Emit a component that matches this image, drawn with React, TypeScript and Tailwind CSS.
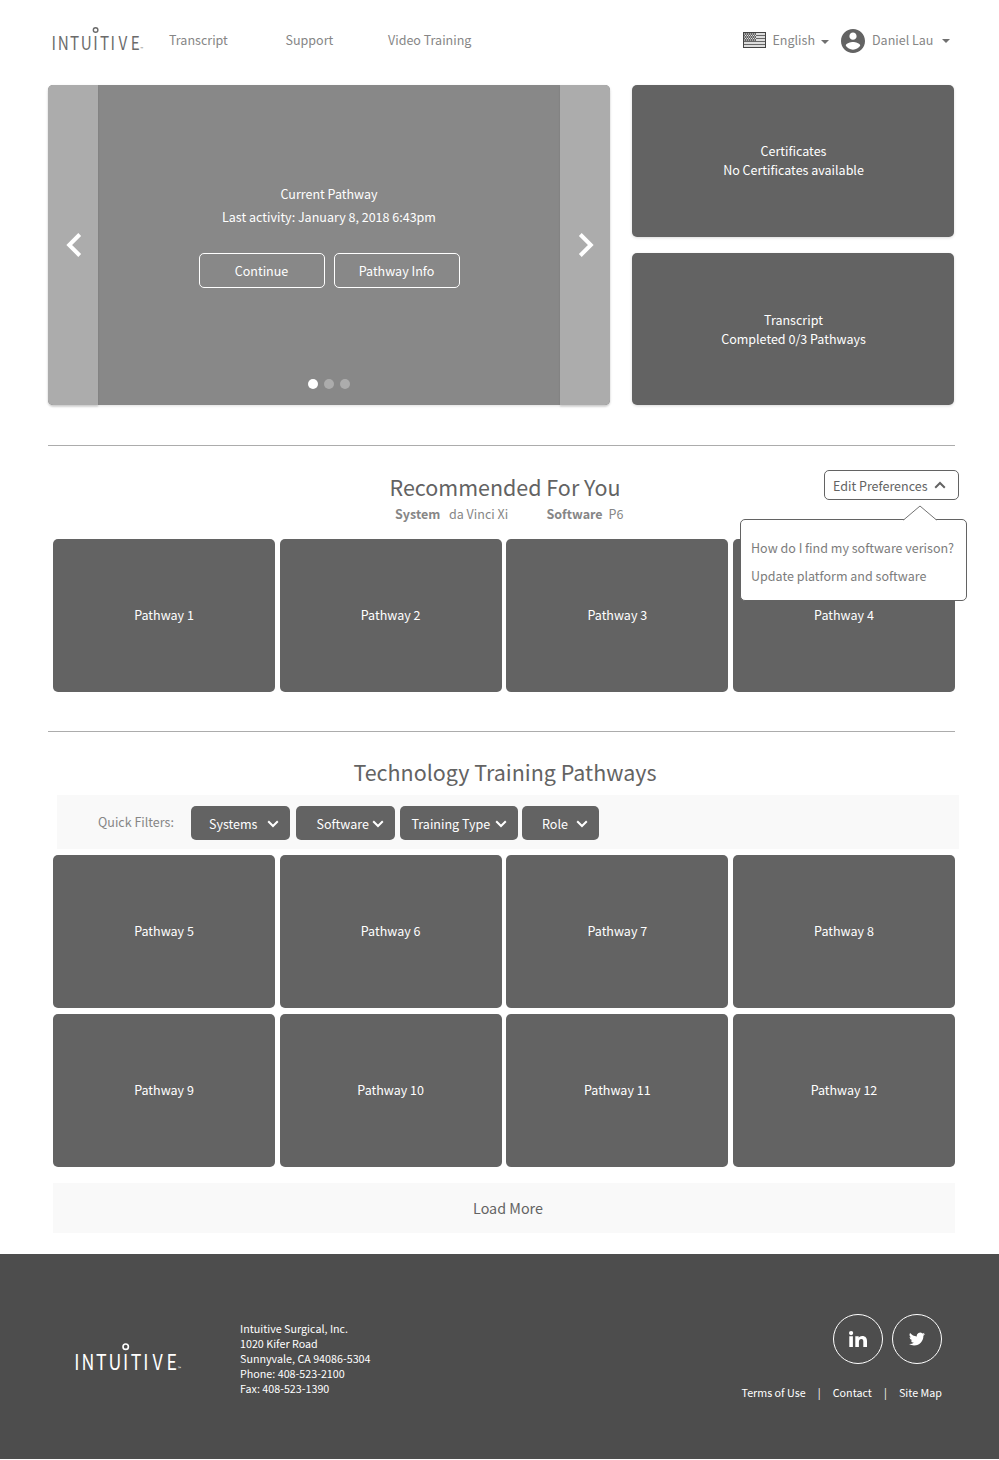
import React from "react";

function Logo({ className }: { className: string }) {
  return (
    <svg viewBox="0 0 92 30" className={"overflow-visible " + className} fill="currentColor">
      <circle cx="43.6" cy="4" r="2.3" fill="none" stroke="currentColor" strokeWidth="1.4" />
      <g transform="scale(0.82 1)" fontFamily="'Noto Sans CJK JP', sans-serif" fontSize="18.6" textAnchor="middle">
        <text y="23.7" x="2 13.8 27.6 41.9 53.1 64 74.2 86.6 101.4">INTUITIVE</text>
      </g>
      <text x="88.4" y="24.4" fontSize="3.5" fontFamily="'Noto Sans CJK JP', sans-serif">™</text>
    </svg>
  );
}

function Flag() {
  return (
    <svg viewBox="0 0 23 16" className="h-4 w-[23px]">
      <rect x="0.5" y="0.5" width="22" height="15" fill="#ddd" stroke="#444" />
      <path d="M1 3.5H22M1 6.5H22M1 9.5H22M1 12.5H22" stroke="#5a5a5a" strokeWidth="0.9" />
      <rect x="1" y="1" width="12" height="8.5" fill="#666" />
      <path d="M1 2H13M2 3.5H13M1 5H13M2 6.5H13M1 8H13" stroke="#eee" strokeWidth="0.9" strokeDasharray="1 1" />
    </svg>
  );
}

function Caret({ className }: { className: string }) {
  return (
    <svg viewBox="0 0 8 4" className={"h-1 w-2 " + className}>
      <path d="M0 0H8L4 4Z" fill="#707070" />
    </svg>
  );
}

function Chevron({ className, d = "M1.2 1.3L6 6L10.8 1.3" }: { className?: string; d?: string }) {
  return (
    <svg viewBox="0 0 12 8" className={"h-2 w-3 shrink-0 " + (className ?? "")} fill="none" stroke="currentColor" strokeWidth="2">
      <path d={d} />
    </svg>
  );
}

function Cards({ from }: { from: number }) {
  return (
    <div className="ml-[53px] flex w-[902px] justify-between">
      {[0, 1, 2, 3].map((i) => (
        <div key={i} className="flex h-[153px] w-[222px] items-center justify-center rounded-[5px] bg-[#636363] pb-px text-white">
          Pathway {from + i}
        </div>
      ))}
    </div>
  );
}

function Filter({ label, className }: { label: string; className: string }) {
  return (
    <button className={"mt-px flex h-[34px] items-center rounded-[5px] bg-[#636363] pt-[2px] text-white " + className}>
      <span className="flex-1 whitespace-nowrap text-left">{label}</span>
      <Chevron className="mr-[11.5px] mt-px" />
    </button>
  );
}

function SideCard({ title, detail, className = "" }: { title: string; detail: string; className?: string }) {
  return (
    <div className={"flex h-[152px] flex-col items-center justify-center rounded-[5px] bg-[#636363] leading-[19px] text-white shadow-[0_1px_3px_rgba(0,0,0,0.15)] " + className}>
      <div>{title}</div>
      <div>{detail}</div>
    </div>
  );
}

export default function App() {
  return (
    <div className="flex h-[1460px] w-[999px] flex-col overflow-hidden bg-white font-['Noto_Sans_CJK_JP',sans-serif] text-[12.53px] leading-5 text-[#868686]">
      <header className="flex h-[85px] shrink-0 items-start pl-[52px]">
        <Logo className="mt-[26px] h-[30px] w-[92px] text-[#6b6b6b]" />
        <nav className="mt-[30px] flex pl-[25px]">
          <a className="w-[116.5px]">Transcript</a>
          <a className="w-[102.5px]">Support</a>
          <a className="w-[355px]">Video Training</a>
        </nav>
        <div className="mt-[28px] flex h-6 items-center">
          <Flag />
          <span className="ml-[6.5px] w-[48.5px]">English</span>
          <Caret className="mt-1" />
          <svg viewBox="2 2 20 20" className="mt-[2px] ml-3 h-6 w-6" fill="#636363">
            <path d="M12 2C6.48 2 2 6.48 2 12s4.48 10 10 10 10-4.48 10-10S17.52 2 12 2zm0 3c1.66 0 3 1.34 3 3s-1.34 3-3 3-3-1.34-3-3 1.34-3 3-3zm0 14.2c-2.5 0-4.71-1.28-6-3.22.03-1.99 4-3.08 6-3.08 1.99 0 5.97 1.09 6 3.08-1.29 1.94-3.5 3.22-6 3.22z" />
          </svg>
          <span className="ml-[7px] w-[70px] whitespace-nowrap">Daniel Lau</span>
          <Caret className="mt-[2px]" />
        </div>
      </header>

      <section className="flex h-[320px] shrink-0 gap-[22px] pl-12">
        <div className="flex w-[562px] rounded-[5px] bg-[#888] text-white shadow-[0_1px_3px_rgba(0,0,0,0.12)]">
          <button className="flex w-[50px] items-center justify-center rounded-l-[5px] bg-[#acacac] pl-0.5 shadow-[0_2px_2px_rgba(0,0,0,0.12)]">
            <svg viewBox="0 0 16 24" className="h-6 w-4" fill="none" stroke="white" strokeWidth="4">
              <path d="M13.7 1.5L3.2 12L13.7 22.5" />
            </svg>
          </button>
          <div className="flex flex-1 flex-col items-center pt-[97px]">
            <div className="leading-[23px]">Current Pathway</div>
            <div className="leading-[23px]">Last activity: January 8, 2018 6:43pm</div>
            <div className="mt-[25px] flex gap-[9px]">
              <button className="h-[35px] w-[126px] rounded-[5px] border border-white pt-px">Continue</button>
              <button className="h-[35px] w-[126px] rounded-[5px] border border-white pt-px">Pathway Info</button>
            </div>
            <div className="mt-[91px] flex gap-[6px]">
              <i className="size-[10px] rounded-full bg-white" />
              <i className="size-[10px] rounded-full bg-[#acacac]" />
              <i className="size-[10px] rounded-full bg-[#acacac]" />
            </div>
          </div>
          <button className="flex w-[50px] items-center justify-center rounded-r-[5px] bg-[#acacac] pl-px shadow-[0_2px_2px_rgba(0,0,0,0.12)]">
            <svg viewBox="0 0 16 24" className="h-6 w-4" fill="none" stroke="white" strokeWidth="4">
              <path d="M2.3 1.5L12.8 12L2.3 22.5" />
            </svg>
          </button>
        </div>
        <div className="flex w-[322px] flex-col gap-4">
          <SideCard title="Certificates" detail="No Certificates available" className="pb-[2px] pl-px" />
          <SideCard title="Transcript" detail="Completed 0/3 Pathways" className="pl-px" />
        </div>
      </section>

      <hr className="mt-10 ml-12 w-[907px] border-[#acacac]" />

      <section className="relative flex h-[285px] shrink-0 flex-col">
        <h2 className="mt-[26px] pl-[11px] text-center text-[21.48px] leading-[30px] text-[#636363]">Recommended For You</h2>
        <div className="mt-[2px] flex h-[35px] pl-[395px] leading-[20px]">
          <b className="w-[54px]">System</b>
          <span className="w-[97.5px]">da Vinci Xi</span>
          <b className="w-[62px]">Software</b>
          <span>P6</span>
        </div>
        <Cards from={1} />
        <button className="absolute top-[24px] left-[824px] flex h-[30px] w-[135px] items-center rounded-[5px] border border-[#636363] bg-white pt-px pl-2 text-[#636363]">
          <span className="w-[100.5px] text-left whitespace-nowrap">Edit Preferences</span>
          <Chevron className="-mt-[2px]" d="M1.2 6.7L6 2L10.8 6.7" />
        </button>
        <div className="absolute top-[73px] left-[740px] h-[82px] w-[227px] rounded-[5px] border border-[#636363] bg-white pt-[14px] pl-[10px] leading-7 whitespace-nowrap text-[#7c7c7c]">
          <svg viewBox="0 0 34 16" className="absolute -top-[15px] left-[162px] h-4 w-[34px]">
            <path d="M0.5 15L17 1L33.5 15V16H0.5Z" fill="white" />
            <path d="M0.5 15L17 1L33.5 15" fill="none" stroke="#636363" strokeWidth="0.9" />
          </svg>
          <div>How do I find my software verison?</div>
          <div>Update platform and software</div>
        </div>
      </section>

      <hr className="ml-12 w-[907px] shrink-0 border-[#acacac]" />

      <section className="flex shrink-0 flex-col">
        <h2 className="mt-[25px] pl-[11px] text-center text-[21.48px] leading-[30px] text-[#636363]">Technology Training Pathways</h2>
        <div className="mt-[8px] mb-[6px] ml-[57px] flex h-[54px] w-[902px] items-center bg-[#f9f9f9] pl-[41px]">
          <span className="w-[93px]">Quick Filters:</span>
          <Filter label="Systems" className="w-[99px] pl-[18px]" />
          <Filter label="Software" className="ml-[6px] w-[99px] pl-[20.5px]" />
          <Filter label="Training Type" className="ml-[5px] w-[118px] pl-[11.5px]" />
          <Filter label="Role" className="ml-1 w-[77px] pl-5" />
        </div>
        <div className="flex flex-col gap-[6px]">
          <Cards from={5} />
          <Cards from={9} />
        </div>
        <button className="mt-4 ml-[53px] h-[50px] w-[902px] bg-[#f9f9f9] pl-2 text-[14.32px] text-[#636363]">Load More</button>
      </section>

      <footer className="mt-[21px] flex h-[205px] shrink-0 bg-[#4d4d4d] text-[10.74px] leading-[15px] text-white">
        <Logo className="mt-[88px] ml-[74px] h-[35px] w-[109px]" />
        <address className="mt-[67px] ml-[57px] w-[502px] not-italic">
          Intuitive Surgical, Inc.<br />
          1020 Kifer Road<br />
          Sunnyvale, CA 94086-5304<br />
          Phone: 408-523-2100<br />
          Fax: 408-523-1390
        </address>
        <div className="mt-[60px] w-[200px]">
          <div className="flex justify-end gap-[9px]">
            <a className="flex size-[50px] items-center justify-center rounded-full border border-white">
              <svg viewBox="0 0 18 17" className="h-[17px] w-[18px]" fill="white">
                <circle cx="2.1" cy="2.1" r="2.1" />
                <path d="M0.3 5.2H3.9V16H0.3ZM6.3 5.2H9.7V6.7C10.4 5.6 11.5 4.9 13.1 4.9C16.7 4.9 18 7 18 10.1V16H14.3V10.7C14.3 9.1 13.9 8.1 12.4 8.1C10.8 8.1 9.9 9.2 9.9 10.9V16H6.3Z" />
              </svg>
            </a>
            <a className="flex size-[50px] items-center justify-center rounded-full border border-white">
              <svg viewBox="0 2 24 20" className="h-[14px] w-4" fill="white">
                <path d="M23.95 4.57a10 10 0 0 1-2.82.77 4.96 4.96 0 0 0 2.16-2.72c-.95.55-2 .96-3.13 1.18a4.92 4.92 0 0 0-8.38 4.48C7.69 8.1 4.07 6.13 1.64 3.16a4.92 4.92 0 0 0 1.52 6.57 4.9 4.9 0 0 1-2.23-.61v.06a4.92 4.92 0 0 0 3.95 4.83 5 5 0 0 1-2.21.08 4.94 4.94 0 0 0 4.6 3.42A9.87 9.87 0 0 1 0 19.54a13.99 13.99 0 0 0 7.55 2.21c9.05 0 14-7.5 14-13.98 0-.21 0-.42-.02-.63a9.94 9.94 0 0 0 2.42-2.57z" />
              </svg>
            </a>
          </div>
          <div className="mt-[21px] -ml-[0.5px] flex justify-between">
            <a>Terms of Use</a><span>|</span><a>Contact</a><span>|</span><a>Site Map</a>
          </div>
        </div>
      </footer>
    </div>
  );
}
